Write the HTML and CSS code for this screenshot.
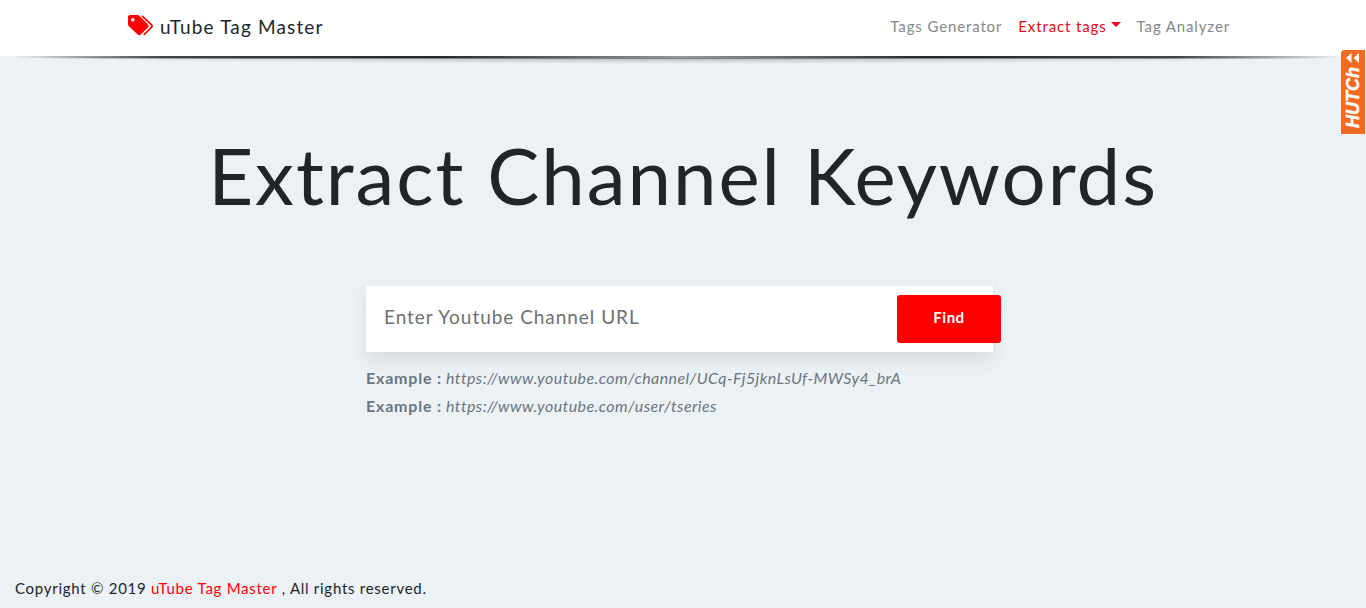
FILE: index.html
```html
<!DOCTYPE html>
<html lang="en">
<head>
<meta charset="utf-8">
<title>uTube Tag Master</title>
<link rel="stylesheet" href="styles.css">
</head>
<body>
<header class="navbar">
  <div class="nav-inner">
    <a class="brand" href="#">
      <svg class="brand-icon" viewBox="0 0 26 21" aria-hidden="true">
        <path fill="#ff0000" d="M0 2.200C0 1 1 0 2.200 0h7.400c.8 0 1.500.3 2 .9l8.300 8.400c.9.9.9 2.300 0 3.100l-7.100 7.100c-.9.9-2.300.9-3.200 0L.9 11.200C.3 10.600 0 9.900 0 9.100z"/>
        <circle cx="4.800" cy="4.800" r="1.800" fill="#fff"/>
        <path fill="none" stroke="#ff0000" stroke-width="1.700" d="M14 .8l9.800 9.400c.5.5.5 1.200 0 1.700L15.800 20"/>
      </svg>
      <span>uTube Tag Master</span>
    </a>
    <nav class="nav-links">
      <a class="nav-link" href="#">Tags Generator</a>
      <a class="nav-link active" href="#">Extract tags<span class="caret"></span></a>
      <a class="nav-link" href="#">Tag Analyzer</a>
    </nav>
  </div>
</header>
<div class="nav-shadow"></div>
<a class="hutch" href="#">
  <svg class="hutch-arrows" viewBox="0 0 14 10" aria-hidden="true"><path fill="#fff" d="M5.500 0v10L0 5zM13 0v10L7.500 5z"/></svg>
  <span class="hutch-text">HUTCh</span>
</a>
<main class="content">
  <h1 class="title">Extract Channel Keywords</h1>
  <section class="search-wrap">
    <form class="search-card">
      <span class="search-input">Enter Youtube Channel URL</span>
      <button class="find-btn" type="button">Find</button>
    </form>
    <p class="example"><b>Example :</b> <i>https://www.youtube.com/channel/UCq-Fj5jknLsUf-MWSy4_brA</i></p>
    <p class="example"><b>Example :</b> <i>https://www.youtube.com/user/tseries</i></p>
  </section>
</main>
<footer class="footer">Copyright © 2019 <a href="#">uTube Tag Master</a> , All rights reserved.</footer>
</body>
</html>
```

FILE: styles.css
```css
* { box-sizing: border-box; }
html, body { height: 100%; }
body {
  margin: 0;
  height: 608px;
  overflow: hidden;
  display: flex;
  flex-direction: column;
  background: #ecf1f5;
  color: #212529;
  font-family: "Lato", "Liberation Sans", sans-serif;
  position: relative;
}
a { text-decoration: none; color: inherit; }
.navbar { background: #fff; height: 56px; flex: none; }
.nav-inner {
  width: 1140px;
  height: 100%;
  margin: 0 auto;
  padding: 0 15px 4px;
  display: flex;
  align-items: center;
  justify-content: space-between;
}
.brand { display: flex; align-items: center; gap: 6px; font-size: 19px; letter-spacing: 1.14px; color: #212529; }
.brand-icon { width: 26px; height: 21px; margin-top: -2px; }
.nav-links { display: flex; }
.nav-link { padding: 0 8px; font-size: 15px; letter-spacing: .87px; color: #85878a; }
.nav-link.active { color: #e8091a; display: flex; align-items: center; }
.caret {
  margin-left: 4px;
  margin-top: -4px;
  border-top: 5px solid #e8091a;
  border-left: 5px solid transparent;
  border-right: 5px solid transparent;
}
.nav-shadow {
  height: 8px;
  flex: none;
  background:
    linear-gradient(90deg, rgba(50,50,50,0) 1%, rgba(50,50,50,.9) 12%, rgba(30,30,30,.95) 32%, rgba(150,150,150,.75) 50%, rgba(30,30,30,.95) 68%, rgba(50,50,50,.9) 86%, rgba(50,50,50,0) 98%) top / 100% 2px no-repeat,
    linear-gradient(90deg, rgba(90,90,90,0) 3%, rgba(90,90,90,.6) 15%, rgba(90,90,90,.6) 85%, rgba(90,90,90,0) 97%) 0 2px / 100% 1px no-repeat,
    radial-gradient(ellipse 50% 100% at 50% 0, rgba(120,120,120,.8) 0, rgba(160,160,160,.45) 50%, rgba(220,225,230,0) 100%);
}
.hutch {
  position: absolute;
  right: 1px;
  top: 50px;
  width: 24px;
  height: 84px;
  background: #f26a21;
  border-radius: 4px 0 0 0;
  display: flex;
  flex-direction: column;
  align-items: center;
  color: #fff;
}
.hutch-arrows { display: block; flex: none; width: 14px; height: 10px; margin: 3px 0 4px; }
.hutch-text {
  writing-mode: vertical-rl;
  transform: rotate(180deg);
  font: italic 700 18px/24px "Liberation Sans", sans-serif;
  -webkit-text-stroke: .4px #fff;
}
.content { flex: 1; display: flex; flex-direction: column; align-items: center; }
.title {
  margin: 63px 0 0;
  font-size: 78px;
  line-height: 96px;
  font-weight: 400;
  letter-spacing: 1.95px;
  color: #212529;
}
.search-wrap { width: 634px; margin: 63px 0 0; }
.search-card {
  width: 627px;
  height: 66px;
  background: #fff;
  box-shadow: 0 8px 16px rgba(60,70,90,.12);
  display: flex;
  align-items: center;
  justify-content: space-between;
  padding-left: 18px;
  margin-bottom: 12px;
}
.search-input { font-size: 19px; letter-spacing: .96px; color: #6f6f6f; margin-top: -5px; }
.find-btn {
  flex: none;
  width: 104px;
  height: 48px;
  margin-right: -8px;
  padding: 0 0 4px;
  border: 0;
  border-radius: 3px;
  background: #ff0000;
  color: #fff;
  font: 700 15px "Lato", sans-serif;
  letter-spacing: .5px;
}
.example { margin: 0; height: 28px; line-height: 28px; font-size: 16px; color: #6c757d; white-space: nowrap; }
.example b { letter-spacing: .8px; }
.example i { letter-spacing: .42px; }
.footer { flex: none; padding: 0 15px 10px; font-size: 15px; letter-spacing: .73px; line-height: 20px; color: #212529; }
.footer a { color: #ff0000; }
```
